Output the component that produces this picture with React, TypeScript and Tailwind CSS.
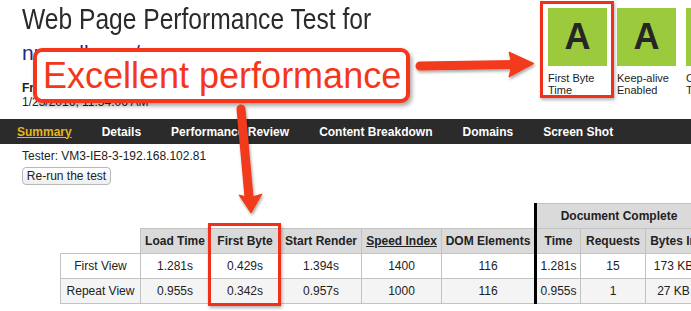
import React from 'react';

const grades = [
  { grade: 'A', label: 'First Byte Time' },
  { grade: 'A', label: 'Keep-alive Enabled' },
  { grade: 'A', label: 'Compress Transfer' },
];

const navItems = ['Summary', 'Details', 'Performance Review', 'Content Breakdown', 'Domains', 'Screen Shot'];

const rows = [
  { view: 'First View', load: '1.281s', ttfb: '0.429s', render: '1.394s', si: '1400', dom: '116', time: '1.281s', req: '15', bytes: '173 KB', bg: 'bg-white' },
  { view: 'Repeat View', load: '0.955s', ttfb: '0.342s', render: '0.957s', si: '1000', dom: '116', time: '0.955s', req: '1', bytes: '27 KB', bg: 'bg-[#f4f4f4]' },
];

const th = 'h-[25px] border border-[#c2c2c2] bg-[#dadada] p-0 text-center text-[12px] font-bold';
const td = 'h-[25px] border border-[#c2c2c2] p-0 text-center text-[12px] font-normal';

function Annotations() {
  return (
    <>
      {/* callout */}
      <div className="absolute left-[33px] top-[48px] flex h-[55px] w-[377px] items-center rounded-[9px] border-[4px] border-[#f5361b] bg-white pl-[6px] shadow-[2px_3px_4px_rgba(0,0,0,0.35)]">
        <span className="text-[36px] leading-[36px] text-[#f5361b]">Excellent performance</span>
      </div>

      {/* highlight boxes */}
      <div className="absolute left-[540px] top-[1px] h-[97px] w-[74px] border-[3px] border-[#f0301a] shadow-[1px_2px_3px_rgba(0,0,0,0.3)]" />
      <div className="absolute left-[208px] top-[223px] h-[83px] w-[73px] border-[3px] border-[#f0301a] shadow-[1px_2px_3px_rgba(0,0,0,0.3)]" />

      {/* arrows */}
      <svg className="pointer-events-none absolute left-0 top-0" width="691" height="311" viewBox="0 0 691 311">
        <defs>
          <filter id="sh" x="-20%" y="-20%" width="140%" height="140%">
            <feDropShadow dx="1" dy="2" stdDeviation="1.5" floodColor="#000" floodOpacity="0.35" />
          </filter>
        </defs>
        <g filter="url(#sh)" fill="#f23a1d" stroke="#f23a1d">
          <line x1="420" y1="66" x2="514" y2="64.5" strokeWidth="9" strokeLinecap="round" />
          <path d="M509 52 L534 63.5 L509 77 Q513 64.5 509 52 Z" strokeWidth="1" strokeLinejoin="round" />
          <line x1="241" y1="109" x2="249" y2="197" strokeWidth="9" strokeLinecap="round" />
          <path d="M239 195 L251 213 L262 194 Q250 199 239 195 Z" strokeWidth="1" strokeLinejoin="round" />
        </g>
      </svg>
    </>
  );
}

export default function App() {
  return (
    <div className="relative h-[311px] w-[691px] overflow-hidden bg-white font-['Liberation_Sans',Arial,sans-serif] text-[#222]">
      {/* header */}
      <div className="flex h-[119px]">
        <div className="w-[548px] shrink-0 pl-[22px] pt-[2px]">
          <h1 className="text-[30px] font-normal leading-[34px] text-[#2a2a2a]">
            <span className="inline-block origin-left scale-x-[0.82] whitespace-nowrap">Web Page Performance Test for</span>
          </h1>
          <div className="mt-[4px] text-[21px] leading-[26px] text-[#1d2a8a]">nuvaell.com/</div>
          <div className="mt-[15px] text-[12px] font-bold leading-[14px]">From: Dulles, VA - IE 8 - DSL</div>
          <div className="text-[12px] leading-[14px]">1/23/2016, 11:54:06 AM</div>
        </div>
        <div className="flex shrink-0 gap-[10px] pt-[8px]">
          {grades.map((g) => (
            <div key={g.label} className="w-[59px] shrink-0">
              <div className="flex h-[58px] items-center justify-center bg-[#9bcb3c] text-[36px] font-bold text-[#262626]">
                {g.grade}
              </div>
              <div className="mt-[6px] text-[11px] leading-[12px] text-[#222]">{g.label}</div>
            </div>
          ))}
        </div>
      </div>

      {/* nav */}
      <div className="flex h-[25px] items-center gap-[30px] bg-[#2b2b2b] pl-[17px] text-[12px] font-bold text-white">
        {navItems.map((item, i) => (
          <span key={item} className={i === 0 ? 'text-[#e6b31e] underline' : ''}>
            {item}
          </span>
        ))}
      </div>

      {/* tester */}
      <div className="pl-[22px] pt-[5px]">
        <div className="text-[12px] leading-[14px]">Tester: VM3-IE8-3-192.168.102.81</div>
        <button className="mt-[2px] h-[18px] w-[89px] rounded-[4px] border border-[#b8b8b8] bg-gradient-to-b from-white to-[#eeeeee] text-[12px] leading-[16px] text-[#222]">
          Re-run the test
        </button>
      </div>

      {/* results table */}
      <table className="ml-[60px] mt-[16px] w-[705px] table-fixed border-collapse">
        <colgroup>
          <col className="w-[80px]" />
          <col className="w-[69px]" />
          <col className="w-[71px]" />
          <col className="w-[81px]" />
          <col className="w-[80px]" />
          <col className="w-[94px]" />
          <col className="w-[45px]" />
          <col className="w-[65px]" />
          <col className="w-[56px]" />
          <col className="w-[64px]" />
        </colgroup>
        <thead>
          <tr>
            <th colSpan={6} className="h-[24px] p-0" />
            <th colSpan={3} className={`${th} h-[24px] border-l-[3px] border-l-black`}>
              Document Complete
            </th>
            <th className={`${th} h-[24px]`}>Fully</th>
          </tr>
          <tr>
            <th className="p-0" />
            <th className={th}>Load Time</th>
            <th className={th}>First Byte</th>
            <th className={th}>Start Render</th>
            <th className={th}>
              <span className="underline">Speed Index</span>
            </th>
            <th className={th}>DOM Elements</th>
            <th className={`${th} border-l-[3px] border-l-black`}>Time</th>
            <th className={th}>Requests</th>
            <th className={th}>Bytes In</th>
            <th className={th}>Time</th>
          </tr>
        </thead>
        <tbody>
          {rows.map((r) => (
            <tr key={r.view} className={r.bg}>
              <td className={td}>{r.view}</td>
              <td className={td}>{r.load}</td>
              <td className={td}>{r.ttfb}</td>
              <td className={td}>{r.render}</td>
              <td className={td}>{r.si}</td>
              <td className={td}>{r.dom}</td>
              <td className={`${td} border-l-[3px] border-l-black`}>{r.time}</td>
              <td className={td}>{r.req}</td>
              <td className={td}>{r.bytes}</td>
              <td className={td}>{r.time}</td>
            </tr>
          ))}
        </tbody>
      </table>

      <Annotations />
    </div>
  );
}
